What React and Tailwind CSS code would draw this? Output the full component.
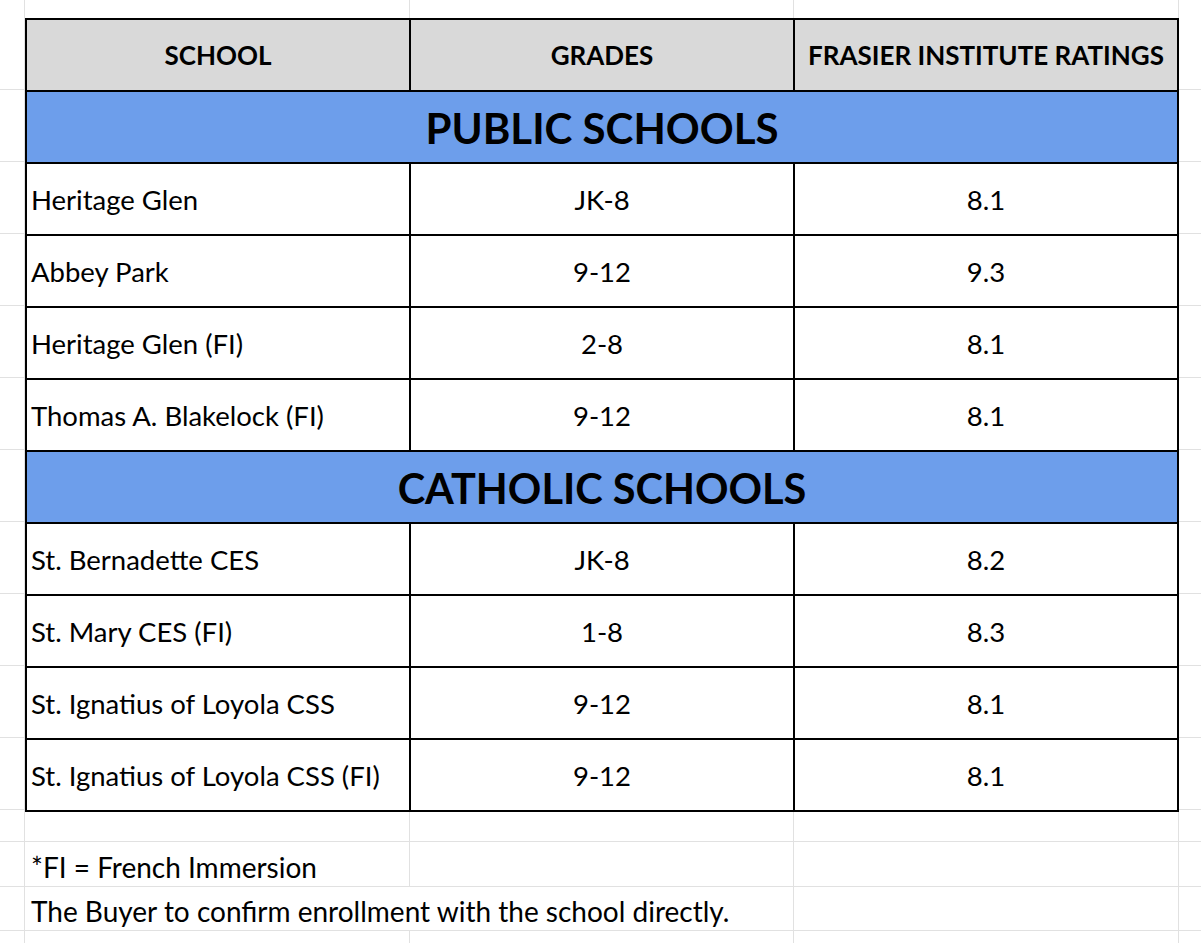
import React from 'react';

const FONT = { fontFamily: 'Lato, "Open Sans", sans-serif' };

const publicSchools = [
  ['Heritage Glen', 'JK-8', '8.1'],
  ['Abbey Park', '9-12', '9.3'],
  ['Heritage Glen (FI)', '2-8', '8.1'],
  ['Thomas A. Blakelock (FI)', '9-12', '8.1'],
];

const catholicSchools = [
  ['St. Bernadette CES', 'JK-8', '8.2'],
  ['St. Mary CES (FI)', '1-8', '8.3'],
  ['St. Ignatius of Loyola CSS', '9-12', '8.1'],
  ['St. Ignatius of Loyola CSS (FI)', '9-12', '8.1'],
];

// light spreadsheet gridline cell
const Grid = ({ className = '', children }) => (
  <div className={`border-r border-b border-[#e1e1e1] ${className}`}>{children}</div>
);

// column of gridline stubs beside the table
const Stubs = ({ right }) => (
  <div className={`flex flex-col ${right ? '' : 'border-r border-[#e1e1e1]'}`}>
    {Array.from({ length: 11 }).map((_, i) => (
      <div key={i} className="h-[72px] border-b border-[#e1e1e1]" />
    ))}
  </div>
);

const SchoolRow = ({ row }) => (
  <>
    <div className="h-[72px] border-r-2 border-b-2 border-black flex items-center pl-[4px] pt-0.5 text-[27.5px] text-black">
      {row[0]}
    </div>
    <div className="h-[72px] border-r-2 border-b-2 border-black flex items-center justify-center pt-0.5 text-[27.5px] text-black">
      {row[1]}
    </div>
    <div className="h-[72px] border-r-2 border-b-2 border-black flex items-center justify-center pt-0.5 text-[27.5px] text-black">
      {row[2]}
    </div>
  </>
);

const SectionRow = ({ title, size }) => (
  <div className={`col-span-3 h-[72px] border-r-2 border-b-2 border-black bg-[#6d9eeb] flex items-center justify-center pt-0.5 font-bold text-black ${size}`}>
    {title}
  </div>
);

const HeadCell = ({ children }) => (
  <div className="h-[72px] border-r-2 border-b-2 border-black bg-[#d9d9d9] flex items-center justify-center text-[26px] font-bold text-black">
    {children}
  </div>
);

export default function App() {
  return (
    <div
      className="w-[1201px] h-[943px] overflow-hidden bg-white grid grid-cols-[25px_385px_384px_385px_1fr] grid-rows-[18px_794px_30px_45px_44px_1fr]"
      style={FONT}
    >
      {/* top strip */}
      <Grid className="border-b-0" />
      <Grid className="border-b-0" />
      <Grid className="border-b-0" />
      <Grid className="border-b-0" />
      <div />

      {/* table row */}
      <Stubs />
      <div className="col-span-3 border-l-2 border-t-2 border-black grid grid-cols-3">
        <HeadCell>SCHOOL</HeadCell>
        <HeadCell>GRADES</HeadCell>
        <HeadCell>FRASIER INSTITUTE RATINGS</HeadCell>
        <SectionRow title="PUBLIC SCHOOLS" size="text-[42px]" />
        {publicSchools.map((r) => (
          <SchoolRow key={r[0]} row={r} />
        ))}
        <SectionRow title="CATHOLIC SCHOOLS" size="text-[41.5px]" />
        {catholicSchools.map((r) => (
          <SchoolRow key={r[0]} row={r} />
        ))}
      </div>
      <Stubs right />

      {/* empty row */}
      <Grid />
      <Grid />
      <Grid />
      <Grid />
      <div className="border-b border-[#e1e1e1]" />

      {/* note row */}
      <Grid />
      <Grid className="flex items-center pl-[6px] pt-1.5 text-[28px] text-black">*FI = French Immersion</Grid>
      <Grid />
      <Grid />
      <div className="border-b border-[#e1e1e1]" />

      {/* disclaimer row */}
      <Grid />
      <Grid className="col-span-2 flex items-center pl-[6px] pt-1 text-[28px] text-black whitespace-nowrap">
        The Buyer to confirm enrollment with the school directly.
      </Grid>
      <Grid />
      <div className="border-b border-[#e1e1e1]" />

      {/* last partial row */}
      <Grid className="border-b-0" />
      <Grid className="border-b-0" />
      <Grid className="border-b-0" />
      <Grid className="border-b-0" />
      <div />
    </div>
  );
}
